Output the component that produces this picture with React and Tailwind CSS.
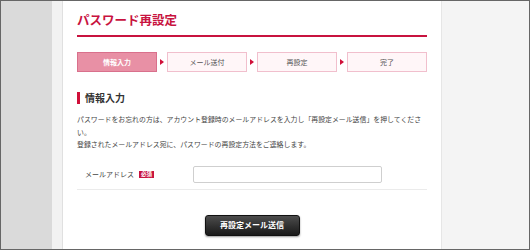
import React from 'react';

const steps = ['情報入力', 'メール送付', '再設定', '完了'];

const StepArrow = () => (
    <div className="flex w-[10px] items-center justify-center">
        <div className="h-0 w-0 border-y-[3px] border-l-[4px] border-y-transparent border-l-[#d0103a]" />
    </div>
);

const App = () => {
    return (
        <div
            className="flex h-[250px] w-[530px] border border-[#666] bg-white"
            style={{ fontFamily: '"Noto Sans CJK JP", "Noto Sans", sans-serif' }}
        >
            <div className="w-[51px] bg-[#dadada]" />
            <div className="w-[11px] border-r border-[#e0e0e0] bg-[#f2f2f2]" />

            <main className="w-[378px] bg-white px-[14px] pt-[10px]">
                {/* page title */}
                <div className="border-b-2 border-[#c8133f] pb-[7px]">
                    <h1 className="text-[12.5px] font-bold leading-[17px] text-[#c8133f]">パスワード再設定</h1>
                </div>

                {/* progress steps */}
                <div className="mt-[15px] flex">
                    {steps.map((s, i) => (
                        <React.Fragment key={s}>
                            {i > 0 && <StepArrow />}
                            <div
                                className={
                                    i === 0
                                        ? 'flex h-[20px] w-[80px] items-center justify-center border border-[#d9708c] bg-[#e890a5] text-[7px] font-bold text-white'
                                        : 'flex h-[20px] w-[80px] items-center justify-center border border-[#f1bfcd] bg-[#fff6f8] text-[7px] text-[#555]'
                                }
                            >
                                {s}
                            </div>
                        </React.Fragment>
                    ))}
                </div>

                {/* section heading */}
                <div className="mt-[20px] flex items-center gap-[5px]">
                    <div className="h-[12px] w-[3px] bg-[#d0103a]" />
                    <h2 className="text-[10px] font-bold leading-[12px] text-[#333]">情報入力</h2>
                </div>

                <div className="mt-[9px] text-[6.9px] leading-[12.5px] text-[#444]">
                    <p className="whitespace-nowrap">
                        パスワードをお忘れの方は、アカウント登録時のメールアドレスを入力し「再設定メール送信」を押してくださ
                    </p>
                    <p>い。</p>
                    <p className="whitespace-nowrap">登録されたメールアドレス宛に、パスワードの再設定方法をご連絡します。</p>
                </div>

                {/* form */}
                <div className="mt-[15px] flex items-center border-b border-[#ebebeb] pb-[6px] pl-[8px]">
                    <div className="flex w-[108px] items-center gap-[5px]">
                        <span className="text-[7px] text-[#444]">メールアドレス</span>
                        <span className="bg-[#c8133f] px-[2px] text-[5.5px] font-bold leading-[7px] text-white">必須</span>
                    </div>
                    <input
                        type="text"
                        className="h-[17px] w-[189px] rounded-[2px] border border-[#cfcfcf] bg-white outline-none"
                    />
                </div>

                <div className="mt-[25px] flex justify-center">
                    <button className="h-[21px] w-[95px] rounded-[3px] border border-[#111] bg-gradient-to-b from-[#4d4d4d] to-[#1a1a1a] text-[8px] font-bold text-white shadow-[0_1px_2px_rgba(0,0,0,0.4)]">
                        再設定メール送信
                    </button>
                </div>
            </main>

            <div className="flex-1 border-l border-[#e6e6e6] bg-[#f4f4f4]" />
        </div>
    );
};

export default App;
